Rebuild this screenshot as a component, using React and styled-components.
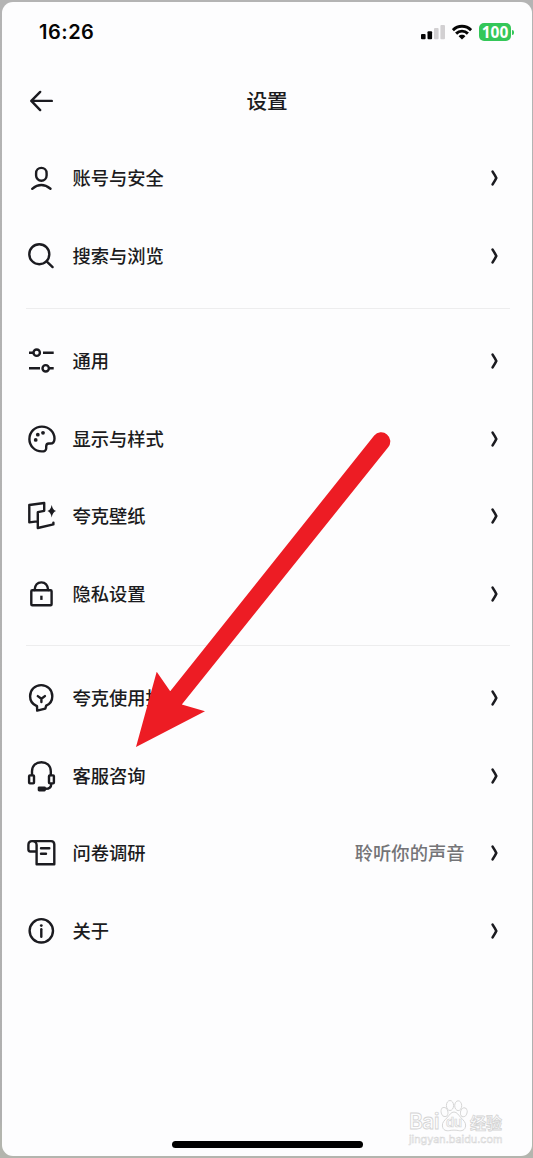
import React from 'react'
import styled, { createGlobalStyle } from 'styled-components'


const GlobalStyle = createGlobalStyle`
*{
    box-sizing: border-box;
}
body{
    margin: 0;
    font-family: Inter, "Noto Sans CJK SC", sans-serif;
    color: #1b1b20;
}
svg{
    display: block;
}
`;

const Backdrop = styled.div`
position: relative;
width: 533px;
height: 1158px;
padding: 2px 1px 2px 2px;
overflow: hidden;
background: linear-gradient(#b4b4b4 0, #b0b0b0 1120px, #b3b5ae 1130px);
`;

const Screen = styled.main`
display: flex;
flex-direction: column;
height: 1154px;
border-radius: 11px;
background-color: #fdfdfe;
`;

const StatusBar = styled.div`
display: flex;
align-items: center;
justify-content: space-between;
height: 60px;
padding: 0 18px 0 37px;
`;

const Clock = styled.time`
font-size: 20px;
font-weight: 600;
letter-spacing: 0.5px;
color: #050505;
line-height: 24px;
`;

const StatusIcons = styled.div`
display: flex;
align-items: center;
gap: 7px;
`;

const Battery = styled.div`
display: flex;
align-items: center;
gap: 1px;

span{
    width: 32px;
    height: 18px;
    border-radius: 5px;
    background-color: #34c759;
    color: white;
    font-family: "Open Sans", sans-serif;
    font-size: 15.5px;
    font-weight: 700;
    line-height: 18px;
    text-align: center;
}
i{
    width: 2px;
    height: 5px;
    border-radius: 0 2px 2px 0;
    background-color: #34c759;
}
`;

const Header = styled.header`
display: grid;
grid-template-columns: 40px 1fr 40px;
align-items: center;
height: 77px;
padding: 0 25px;

h1{
    margin: 0;
    padding-bottom: 2px;
    font-size: 20.6px;
    font-weight: 500;
    line-height: 30px;
    text-align: center;
    font-family: "Noto Sans CJK SC", sans-serif;
}
`;

const BackButton = styled.button`
padding: 0;
border: none;
background: none;
color: #1b1b20;
`;

const Section = styled.section`
margin: 0 22px 0 24px;
padding: ${(props) => (props.$first ? '0.6px' : '13.4px')} 0 ${(props) => (props.$first ? '13.4px' : '12.6px')};

& + &{
    border-top: 1px solid #ededee;
}
`;

const Row = styled.div`
display: flex;
align-items: center;
height: 77.5px;
padding-right: 10px;
`;

const RowIcon = styled.svg`
width: 32px;
height: 32px;
margin-left: -1px;
flex: none;
fill: none;
stroke: #1b1b20;
stroke-width: 2.4;
stroke-linecap: round;
stroke-linejoin: round;

.solid{
    fill: #1b1b20;
    stroke: none;
}
`;

const RowLabel = styled.span`
flex: 1;
margin-left: 15.5px;
padding-bottom: 2px;
font-family: "Noto Sans CJK SC", sans-serif;
font-size: 18.3px;
font-weight: 500;
line-height: 28px;
`;

const RowNote = styled.span`
margin-right: 25.5px;
padding-bottom: 2px;
font-family: "Noto Sans CJK SC", sans-serif;
font-size: 18.3px;
font-weight: 500;
line-height: 28px;
color: #747477;
`;

const HomeBar = styled.div`
width: 191px;
height: 6.5px;
margin: auto auto 8.5px 170px;
border-radius: 4px;
background-color: black;
`;

const Pointer = styled.svg`
position: absolute;
left: 130px;
top: 425px;
fill: #ed1c24;
`;

const Watermark = styled.div`
position: absolute;
left: 409px;
top: 1098px;
width: 96px;
color: #fdfdfe;
-webkit-text-stroke: 0.8px #d4d4d4;

.brand{
    display: flex;
    align-items: flex-end;
    height: 34px;
}
.bai{
    width: 31px;
    font-size: 21px;
    font-weight: 600;
    line-height: 20px;
    letter-spacing: -0.5px;
}
.cn{
    margin-left: 2px;
    font-family: "Noto Sans CJK SC", sans-serif;
    font-size: 16px;
    font-weight: 700;
    line-height: 20px;
}
.site{
    font-size: 10.8px;
    line-height: 12px;
    margin-top: 2px;
    white-space: nowrap;
    -webkit-text-stroke-width: 0.5px;
}
`;

const icons = {
    account: (
        <>
            <rect x="11.1" y="5.9" width="10.5" height="12.8" rx="5.25" />
            <path d="M7.2 26.8Q16.3 19.2 25.5 26.8" />
        </>
    ),
    search: (
        <>
            <circle cx="14.3" cy="14.2" r="10" />
            <path d="M21.6 21.4l6 5.7" />
        </>
    ),
    sliders: (
        <g strokeLinecap="butt">
            <circle cx="11.7" cy="7.7" r="3.2" />
            <path d="M4 7.7h4.5M18 7.7h10.7M4 23.3h11M24 23.3h4.7" />
            <circle cx="20.7" cy="23.3" r="3.2" />
        </g>
    ),
    palette: (
        <>
            <path d="M16.7 28.4C9.8 28.2 4.4 22.9 4.4 16.2C4.4 9 9.9 3.6 16.9 3.6C24 3.6 29.4 8.9 29.5 15.4C29.5 18.4 28 20.5 25.2 20.5H23.8C21.9 20.5 21.2 21.7 21.2 23.6V25.2C21.2 27.5 19.5 28.5 16.7 28.4Z" />
            <circle className="solid" cx="18" cy="9.8" r="1.9" />
            <circle className="solid" cx="12.8" cy="11.7" r="1.9" />
            <circle className="solid" cx="10.7" cy="16.9" r="1.9" />
        </>
    ),
    wallpaper: (
        <>
            <path d="M12 21.4L4.3 22.4V5L19.2 3V10.8L12.8 12.2V28L28.4 24.4V22.6" />
            <path className="solid" d="M26.7 5Q27.6 10 31 11.1Q27.6 12.2 26.7 17.4Q25.8 12.2 22.4 11.1Q25.8 10 26.7 5Z" />
        </>
    ),
    lock: (
        <>
            <rect x="6.3" y="12.3" width="20.3" height="15" rx="1" />
            <path d="M9.6 12C10 7 12.5 4.4 16.4 4.4S22.7 7 23.2 12" />
            <path d="M16.4 17.7v4.2" strokeLinecap="butt" />
        </>
    ),
    guide: (
        <>
            <path d="M11 23.6C7.2 21.8 5.1 18.3 5.1 14.2C5.1 7.8 9.9 3.1 16.2 3.1S27.3 7.8 27.3 14.2C27.3 18.4 25 21.9 21.2 23.6L20.3 26.6L12.2 28.6L12 24.1Z" />
            <path d="M12.8 14.1L16.4 16.8L19.9 14.1M16.4 16.8V20.1" />
        </>
    ),
    headset: (
        <>
            <path d="M7 15V11.2C7.2 5.6 11 2.3 16.4 2.3S25.6 5.6 25.8 11.2V15" />
            <rect x="4.1" y="15.4" width="4.9" height="8" rx="0.8" />
            <rect x="24" y="15.4" width="4.9" height="8" rx="0.8" />
            <path d="M26.2 24.2C26.2 27.6 24 28.8 20.7 28.8" />
            <rect className="solid" x="12.7" y="26.4" width="8.2" height="5" rx="1.4" />
        </>
    ),
    survey: (
        <>
            <path d="M10.8 14.5H5.3C4 14.5 3.4 13.7 3.4 12.2V7.9C3.4 5.6 4.8 4.1 7 4.1H26C28.3 4.1 29.3 5.4 29.3 7.6V27.3H11.6V8C11.6 5.5 9.7 4.1 7.4 4.1" />
            <path d="M16 11.2h8.3M16 16.7h5" />
        </>
    ),
    about: (
        <>
            <circle cx="16.3" cy="15.8" r="11.7" />
            <circle className="solid" cx="16.3" cy="10.6" r="1.4" />
            <path d="M16.3 14.2v7.6" />
        </>
    ),
};

const sections = [
    [
        { icon: 'account', label: '账号与安全' },
        { icon: 'search', label: '搜索与浏览' },
    ],
    [
        { icon: 'sliders', label: '通用' },
        { icon: 'palette', label: '显示与样式' },
        { icon: 'wallpaper', label: '夸克壁纸' },
        { icon: 'lock', label: '隐私设置' },
    ],
    [
        { icon: 'guide', label: '夸克使用指南' },
        { icon: 'headset', label: '客服咨询' },
        { icon: 'survey', label: '问卷调研', note: '聆听你的声音' },
        { icon: 'about', label: '关于' },
    ],
];

function Chevron() {
    return (
        <svg width="10" height="18" viewBox="0 0 10 18" fill="none" stroke="#1b1b20" strokeWidth="2.6" strokeLinecap="round" strokeLinejoin="round">
            <path d="M2.6 2.6C4.1 4.9 5.2 6.6 6.3 9C5.2 11.4 4.1 13.1 2.6 15.4" />
        </svg>
    )
}

function SettingRow({ icon, label, note }) {
    return (
        <Row>
            <RowIcon viewBox="0 0 32 32">{icons[icon]}</RowIcon>
            <RowLabel>{label}</RowLabel>
            {note && <RowNote>{note}</RowNote>}
            <Chevron />
        </Row>
    )
}

export default function App() {
    return (
        <>
            <GlobalStyle />
            <Backdrop>
                <Screen>
                    <StatusBar>
                        <Clock>16:26</Clock>
                        <StatusIcons>
                            <svg width="24" height="16" viewBox="0 0 24 16">
                                <rect x="0" y="10" width="4.6" height="5.3" rx="1" fill="#050505" />
                                <rect x="6.5" y="7.3" width="4.6" height="8" rx="1" fill="#050505" />
                                <rect x="13" y="4" width="4.6" height="11.3" rx="1" fill="#d2d0d2" />
                                <rect x="19.4" y="1" width="4.6" height="14.3" rx="1" fill="#d2d0d2" />
                            </svg>
                            <svg width="20" height="16" viewBox="0 0 20 16" fill="none" stroke="#050505" strokeWidth="2.9">
                                <path d="M0.9 6.1C6 1 14 1 19.1 6.1" />
                                <path d="M4.1 9.6C7.4 6.3 12.6 6.3 15.9 9.6" />
                                <path d="M10 15.6L6.6 12.2C8.5 10.4 11.5 10.4 13.4 12.2Z" fill="#050505" stroke="none" />
                            </svg>
                            <Battery><span>100</span><i /></Battery>
                        </StatusIcons>
                    </StatusBar>
                    <Header>
                        <BackButton aria-label="返回">
                            <svg width="28" height="24" viewBox="0 0 28 24" fill="none" stroke="#1b1b20" strokeWidth="2.4" strokeLinecap="round" strokeLinejoin="round">
                                <path d="M24.8 11.9H4.3M13.2 2.9L4.3 11.9L13.2 21.1" />
                            </svg>
                        </BackButton>
                        <h1>设置</h1>
                    </Header>
                    {sections.map((rows, i) => (
                        <Section key={i} $first={i === 0}>
                            {rows.map((row) => <SettingRow key={row.label} {...row} />)}
                        </Section>
                    ))}
                    <HomeBar />
                </Screen>
                <Pointer width="270" height="330" viewBox="130 425 270 330">
                    <path d="M136 747L156.7 671.7L170.2 691.2L374.2 435.6A9 9 0 0 1 388.2 447.2L181.8 704.6L205 711.2Z" />
                </Pointer>
                <Watermark>
                    <div className="brand">
                        <span className="bai">Bai</span>
                        <svg width="28" height="34" viewBox="0 0 28 34" fill="#fdfdfe" stroke="#d6d6d6" strokeWidth="1">
                            <ellipse cx="4.5" cy="14" rx="3.4" ry="4.6" transform="rotate(-15 4.5 14)" />
                            <ellipse cx="10" cy="7.5" rx="3.6" ry="5" />
                            <ellipse cx="18.2" cy="7.7" rx="3.5" ry="4.9" />
                            <ellipse cx="23.8" cy="14.3" rx="3.3" ry="4.5" transform="rotate(15 23.8 14.3)" />
                            <path d="M14 14C11 14 9.3 17.2 7 19.8C4.3 22.6 2 24.5 2.4 28C2.9 32.3 6.2 33.3 9.8 32.5C12.6 32 15.4 32 18.2 32.5C21.8 33.3 25.1 32.3 25.6 28C26 24.5 23.7 22.6 21 19.8C18.7 17.2 17 14 14 14Z" />
                            <text x="14" y="29" textAnchor="middle" fontFamily="Inter" fontSize="13" fontWeight="600" strokeWidth="0.7">du</text>
                        </svg>
                        <span className="cn">经验</span>
                    </div>
                    <div className="site">jingyan.baidu.com</div>
                </Watermark>
            </Backdrop>
        </>
    )
}
